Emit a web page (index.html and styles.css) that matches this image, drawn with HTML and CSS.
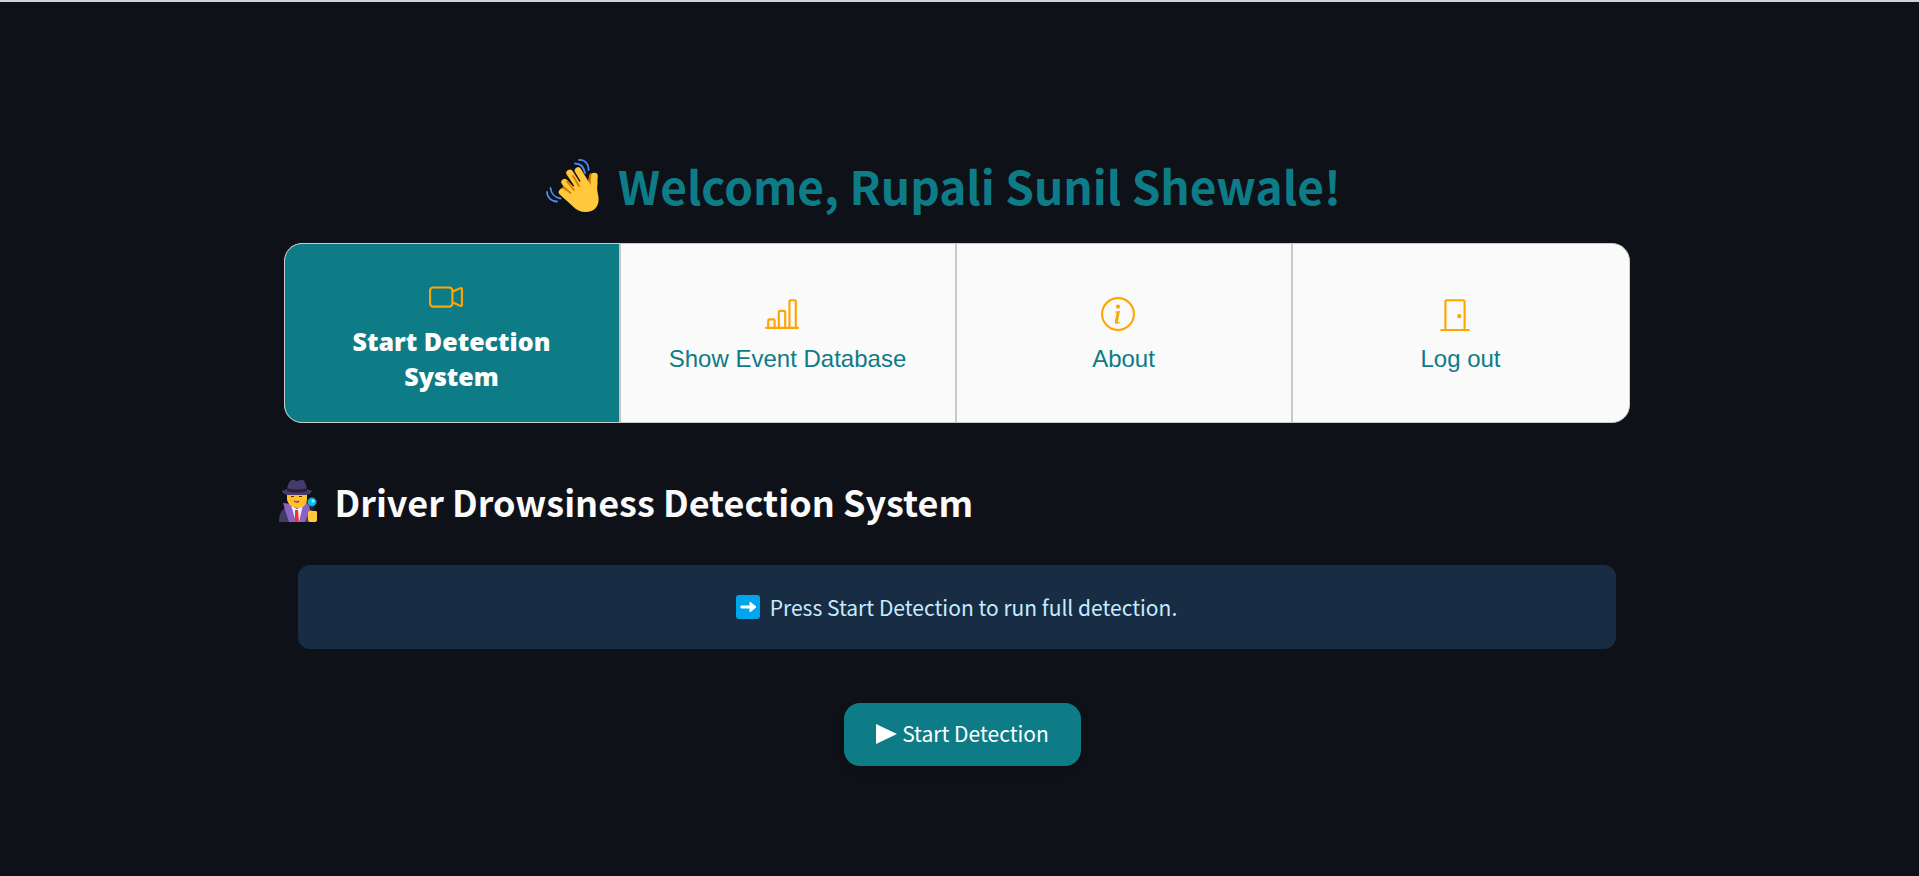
FILE: index.html
```
<!DOCTYPE html>
<html lang="en">
<head>
<meta charset="utf-8">
<title>Driver Drowsiness Detection System</title>
<link rel="stylesheet" href="styles.css">
</head>
<body>
<main class="page">
  <h1 class="welcome">
    <svg class="wave" viewBox="0 0 54 54" aria-hidden="true">
      <g fill="none" stroke="#4a8cf5" stroke-width="1.8" stroke-linecap="round">
        <path d="M33 1c6-.5 10 4 9.500 10M29 4.500c6 0 9 4 10 9.500M1 33c0 5 4 9.500 10 9.500M4.500 29c.5 5 4 9.500 10 10.500"/>
      </g>
      <path fill="none" stroke="#d67d00" stroke-width="6" stroke-linecap="round" stroke-linejoin="round" d="M17 32l8 6M18 23l10 12M23 14l10 14M46 17l-2 12"/>
      <g fill="none" stroke="#ffc83d" stroke-width="6.500" stroke-linecap="round">
        <path d="M16 33l14 12M19 23.500l14 15M24 14l12 19M32 11.500l12 20M48.500 17l-1 16"/>
      </g>
      <path fill="#ffc83d" d="M13.500 35l12-6 12-9 6 7 8-4c-1 6 0 10 1 15 1 9-4 15-13 15-5 0-9-2-13-6z"/>
      <g fill="none" stroke="#d67d00" stroke-width="1.800" stroke-linecap="round">
        <path d="M17.500 28l7 6M21 22.500l7 8.500M27 17l6 10"/>
      </g>
    </svg>
    <span>Welcome, Rupali Sunil Shewale!</span>
  </h1>

  <nav class="menu" aria-label="Main">
    <a class="item active" href="#start" aria-current="page">
      <svg class="icon" viewBox="0 0 16 16" aria-hidden="true"><path fill-rule="evenodd" d="M0 5a2 2 0 0 1 2-2h7.500a2 2 0 0 1 1.983 1.738l3.110-1.382A1 1 0 0 1 16 4.269v7.462a1 1 0 0 1-1.406.913l-3.111-1.382A2 2 0 0 1 9.500 13H2a2 2 0 0 1-2-2zm11.500 5.175 3.500 1.556V4.269l-3.500 1.556zM2 4a1 1 0 0 0-1 1v6a1 1 0 0 0 1 1h7.500a1 1 0 0 0 1-1V5a1 1 0 0 0-1-1z"/></svg>
      <span>Start Detection System</span>
    </a>
    <a class="item" href="#events">
      <svg class="icon" viewBox="0 0 16 16" aria-hidden="true"><path d="M11 2a1 1 0 0 1 1-1h2a1 1 0 0 1 1 1v12h.5a.5.5 0 0 1 0 1H.5a.5.5 0 0 1 0-1H1v-3a1 1 0 0 1 1-1h2a1 1 0 0 1 1 1v3h1V7a1 1 0 0 1 1-1h2a1 1 0 0 1 1 1v7h1zm1 12h2V2h-2zm-3 0V7H7v7zm-5 0v-3H2v3z"/></svg>
      <span>Show Event Database</span>
    </a>
    <a class="item" href="#about">
      <svg class="icon" viewBox="0 0 16 16" aria-hidden="true"><path d="M8 15A7 7 0 1 1 8 1a7 7 0 0 1 0 14m0 1A8 8 0 1 0 8 0a8 8 0 0 0 0 16"/><path d="m8.930 6.588-2.290.287-.082.380.450.083c.294.070.352.176.288.469l-.738 3.468c-.194.897.105 1.319.808 1.319.545 0 1.178-.252 1.465-.598l.088-.416c-.2.176-.492.246-.686.246-.275 0-.375-.193-.304-.533zM9 4.500a1 1 0 1 1-2 0 1 1 0 0 1 2 0"/></svg>
      <span>About</span>
    </a>
    <a class="item" href="#logout">
      <svg class="icon" viewBox="0 0 16 16" aria-hidden="true"><path d="M3 2a1 1 0 0 1 1-1h8a1 1 0 0 1 1 1v13h1.500a.5.5 0 0 1 0 1h-13a.5.5 0 0 1 0-1H3zm1 13h8V2H4z"/><path d="M9 9a1 1 0 1 0 2 0 1 1 0 0 0-2 0"/></svg>
      <span>Log out</span>
    </a>
  </nav>

  <h2 class="heading">
    <svg class="detective" viewBox="0 0 38 42" aria-hidden="true">
      <path fill="#423b63" d="M0 42c0-9 3-13 8-15h20c3 2 4 6 4 15z"/>
      <path fill="#8b62c4" d="M4 23l8 1 6 18h-8l-3-9zM30 22l-6 3-5 17h7l5-12z"/>
      <path fill="#f4efff" d="M12 25l5 17h3l4-17-6 4z"/>
      <path fill="#f8312f" d="M16 30h3l1 12h-4z"/>
      <path fill="#ffc22e" d="M8 13h20v6c0 6-4 9-9 9s-11-4-11-9z"/>
      <path fill="#433b6b" d="M3 11c1-1 4-1 5-2 1-4 2-8 5-9 2-1 3 1 5 1s4-2 6-1c2 1 3 5 4 9 1 1 4 1 5 2-1 3-4 4-8 4H11c-4 0-7-1-8-4z"/>
      <path fill="#321b41" d="M8 8c6 2 14 2 20 0v3c-6 2-14 2-20 0z"/>
      <path fill="#5a2929" d="M12 16h3v1h-3zM20 16h3v1h-3z"/>
      <path fill="none" stroke="#c51f4c" stroke-width="1.500" d="M15 21q3 2 5 0"/>
      <path stroke="#2f2449" stroke-width="3" d="M33 26v6"/>
      <circle cx="33" cy="22" r="4.500" fill="#00c4ee" stroke="#27406a"/>
      <circle cx="34" cy="21" r="1.500" fill="#b9f4ff"/>
      <path fill="#ffc83d" d="M29 33c0-2 2-3 4-2h4c1 0 1 1 1 2v7c0 1-1 2-2 2h-5c-1 0-2-1-2-2z"/>
    </svg>
    <span>Driver Drowsiness Detection System</span>
  </h2>

  <p class="notice">
    <svg class="arrow" viewBox="0 0 24 24" aria-hidden="true"><rect width="24" height="24" rx="3" fill="#00a6ed"/><path fill="#fff" stroke="#fff" stroke-linejoin="round" d="M5 11h9V7l6 5-6 5v-4H5z"/></svg>
    <span>Press Start Detection to run full detection.</span>
  </p>

  <div class="actions">
    <button class="start" type="button">
      <svg class="play" viewBox="0 0 21 20" aria-hidden="true"><path fill="#fff" d="M0 0l21 10L0 20z"/></svg>
      <span>Start Detection</span>
    </button>
  </div>
</main>
</body>
</html>
```
FILE: styles.css
```
* {
  box-sizing: border-box;
}

body {
  margin: 0;
  min-height: 100vh;
  border-top: 2px solid #d0d2d5;
  background: #0e1117;
  color: #fafafa;
  font-family: "Noto Sans CJK JP", "Noto Sans", sans-serif;
}

.page {
  width: 90%;
  max-width: 1386px;
  margin: 0 auto;
  padding: 148px 23px 0 17px;
}

.welcome {
  display: flex;
  align-items: center;
  justify-content: center;
  gap: 18px;
  margin: 0 0 23px;
  padding-right: 26px;
  color: #0e7c86;
  font-size: 46px;
  font-weight: 600;
  line-height: 70px;
}

.wave {
  width: 54px;
  height: 54px;
  margin-top: 2px;
}

.menu {
  display: grid;
  grid-template-columns: repeat(4, 1fr);
  min-height: 180px;
  border: 1px solid #c8cccc;
  border-radius: 18px;
  overflow: hidden;
  background: #fafafa;
}

.item {
  display: flex;
  flex-direction: column;
  align-items: center;
  justify-content: center;
  padding: 0 32px;
  border-right: 2px solid #c8c8c8;
  color: #0e7c86;
  font: 24px/35px "Liberation Sans", Arial, sans-serif;
  text-align: center;
  text-decoration: none;
}

.item:last-child {
  border-right: 0;
}

.active {
  background: #0e7c86;
  color: #fff;
  font-family: "Arial Black", "Open Sans", "Liberation Sans", sans-serif;
  font-size: 25px;
  font-weight: 800;
}

.icon {
  width: 34px;
  height: 34px;
  margin: 7px 12px 10px 0;
  fill: orange;
}

.heading {
  display: flex;
  align-items: center;
  gap: 18px;
  margin: 47px 0 33px -5px;
  font-size: 36px;
  font-weight: 600;
  line-height: 62px;
}

.detective {
  width: 38px;
  height: 42px;
}

.notice {
  display: flex;
  align-items: center;
  justify-content: center;
  gap: 10px;
  margin: 0 14px;
  padding: 26px 16px;
  border-radius: 12px;
  background: #182d43;
  color: #c7ebff;
  font-size: 21px;
  line-height: 32px;
}

.arrow {
  width: 24px;
  height: 24px;
}

.actions {
  display: flex;
  justify-content: center;
  margin-top: 54px;
  padding-left: 12px;
}

.start {
  display: flex;
  align-items: center;
  gap: 5px;
  padding: 14px 32px 17px;
  border: 0;
  border-radius: 16px;
  background: #0e7c86;
  color: #fff;
  font-family: inherit;
  font-size: 21px;
  line-height: 32px;
  box-shadow: 0 4px 10px rgba(0, 0, 0, 0.15);
}

.play {
  width: 21px;
  height: 20px;
  margin-top: 2px;
}
```
